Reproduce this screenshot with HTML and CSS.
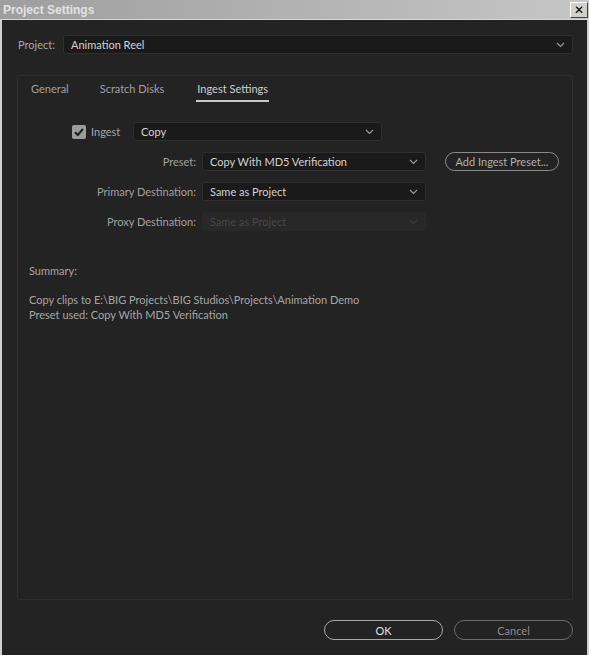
FILE: index.html
```html
<!DOCTYPE html>
<html>
<head>
<meta charset="utf-8">
<link rel="stylesheet" href="styles.css">
</head>
<body>
<div class="window">
  <div class="titlebar">
    <span class="title">Project Settings</span>
    <span class="close">&#x2715;</span>
  </div>
  <div class="content">
    <div class="project-row">
      <span class="label">Project:</span>
      <div class="select wide"><span>Animation Reel</span><svg class="chev" width="9" height="6" viewBox="0 0 9 6"><polyline points="1,1 4.5,4.5 8,1" fill="none" stroke="#9a9a9a" stroke-width="1.2"/></svg></div>
    </div>
    <div class="panel">
      <div class="tabs">
        <span class="tab">General</span>
        <span class="tab">Scratch Disks</span>
        <span class="tab active">Ingest Settings</span>
      </div>
      <div class="ingest-row">
        <span class="check"><svg width="14" height="14" viewBox="0 0 14 14"><polyline points="3,7.2 5.8,10 11,4" fill="none" stroke="#1f1f1f" stroke-width="2"/></svg></span>
        <span class="ingest-label">Ingest</span>
        <div class="select ingest-select"><span>Copy</span><svg class="chev" width="9" height="6" viewBox="0 0 9 6"><polyline points="1,1 4.5,4.5 8,1" fill="none" stroke="#9a9a9a" stroke-width="1.2"/></svg></div>
      </div>
      <div class="form">
        <span class="flabel">Preset:</span>
        <div class="select"><span>Copy With MD5 Verification</span><svg class="chev" width="9" height="6" viewBox="0 0 9 6"><polyline points="1,1 4.5,4.5 8,1" fill="none" stroke="#9a9a9a" stroke-width="1.2"/></svg></div>
        <button class="pill add">Add Ingest Preset...</button>
        <span class="flabel">Primary Destination:</span>
        <div class="select"><span>Same as Project</span><svg class="chev" width="9" height="6" viewBox="0 0 9 6"><polyline points="1,1 4.5,4.5 8,1" fill="none" stroke="#9a9a9a" stroke-width="1.2"/></svg></div>
        <span></span>
        <span class="flabel">Proxy Destination:</span>
        <div class="select disabled"><span>Same as Project</span><svg class="chev" width="9" height="6" viewBox="0 0 9 6"><polyline points="1,1 4.5,4.5 8,1" fill="none" stroke="#3c3c3c" stroke-width="1.2"/></svg></div>
        <span></span>
      </div>
      <div class="summary">
        <p class="sum-title">Summary:</p>
        <p>Copy clips to E:\BIG Projects\BIG Studios\Projects\Animation Demo<br>Preset used: Copy With MD5 Verification</p>
      </div>
    </div>
    <div class="buttons">
      <button class="pill ok">OK</button>
      <button class="pill cancel">Cancel</button>
    </div>
  </div>
</div>
</body>
</html>
```
FILE: styles.css
```css
html, body {
  margin: 0;
  padding: 0;
  background: #232323;
}
.window {
  width: 589px;
  height: 655px;
  box-sizing: border-box;
  border-left: 2px solid #d0d0d0;
  border-right: 2px solid #d0d0d0;
  background: #232323;
  display: flex;
  flex-direction: column;
  font-family: Lato, "Open Sans", sans-serif;
  font-size: 11px;
  color: #a6a6a6;
}
.titlebar {
  height: 19px;
  border-bottom: 1px solid #d8d8d8;
  background: linear-gradient(to right, #9e9e9e, #c6c6c6);
  display: flex;
  align-items: center;
  justify-content: space-between;
  padding: 0 0 0 3px;
  margin: 0 -2px;
}
.title {
  font-family: "Liberation Sans", Arial, sans-serif;
  font-weight: bold;
  font-size: 12px;
  color: #e2e2e2;
}
.close {
  width: 16px;
  height: 14px;
  margin-right: 1px;
  background: #d4d0c8;
  border-top: 1px solid #ffffff;
  border-left: 1px solid #ffffff;
  border-right: 1px solid #404040;
  border-bottom: 1px solid #404040;
  font-family: "DejaVu Sans", sans-serif;
  font-size: 12px;
  font-weight: bold;
  color: #000;
  display: flex;
  align-items: center;
  justify-content: center;
  line-height: 1;
}
.content {
  flex: 1;
  display: flex;
  flex-direction: column;
  padding: 15px 14px 0 15px;
}
.project-row {
  display: flex;
  align-items: center;
  height: 19px;
}
.project-row .label {
  margin-left: 1px;
  width: 45px;
}
.select {
  box-sizing: border-box;
  height: 19px;
  width: 224px;
  background: #1a1a1a;
  border: 1px solid #2f2f2f;
  border-radius: 3px;
  display: flex;
  align-items: center;
  justify-content: space-between;
  padding: 0 7px 0 7px;
  color: #d2d2d2;
}
.select.wide {
  flex: 1;
}
.select.disabled {
  background: #282828;
  border-color: #282828;
  color: #474747;
}
.chev {
  display: block;
}
.panel {
  margin-top: 21px;
  height: 525px;
  box-sizing: border-box;
  border: 1px solid #2e2e2e;
  border-radius: 2px;
  display: flex;
  flex-direction: column;
}
.tabs {
  display: flex;
  gap: 31px;
  padding: 5px 0 0 13px;
  height: 22px;
}
.tab {
  color: #a0a0a0;
  font-size: 11px;
  line-height: 16px;
  height: 16px;
  padding-bottom: 3px;
}
.tab.active {
  color: #d0d0d0;
  border-bottom: 2px solid #c8c8c8;
  padding: 0 1px 3px;
  margin-left: 1px;
}
.ingest-row {
  display: flex;
  align-items: center;
  margin-top: 19px;
  padding-left: 54px;
  height: 19px;
}
.check {
  width: 14px;
  height: 14px;
  background: #9c9c9c;
  border-radius: 2px;
  display: block;
}
.check svg {
  display: block;
}
.ingest-label {
  margin-left: 5px;
  width: 42px;
  color: #a6a6a6;
}
.select.ingest-select {
  width: 249px;
}
.form {
  margin-top: 11px;
  display: grid;
  grid-template-columns: 178px 224px 114px;
  column-gap: 6px;
  row-gap: 11px;
  align-items: center;
}
.flabel {
  text-align: right;
  color: #a0a0a0;
}
.pill {
  box-sizing: border-box;
  height: 19px;
  border-radius: 10px;
  background: transparent;
  font-family: Lato, "Open Sans", sans-serif;
  font-size: 11px;
  padding: 0;
  margin: 0;
}
.add {
  margin-left: 13px;
  width: 114px;
  border: 1px solid #8a8a8a;
  color: #b0b0b0;
}
.summary {
  padding: 32px 0 0 11px;
  line-height: 15px;
  color: #a6a6a6;
}
.summary p {
  margin: 0;
}
.summary .sum-title {
  margin-bottom: 14px;
}
.buttons {
  margin-top: 20px;
  display: flex;
  justify-content: flex-end;
  gap: 11px;
}
.ok {
  width: 119px;
  height: 20px;
  border: 1px solid #a8a8a8;
  color: #e0e0e0;
}
.cancel {
  width: 119px;
  height: 20px;
  border: 1px solid #6e6e6e;
  color: #8c8c8c;
}
```
